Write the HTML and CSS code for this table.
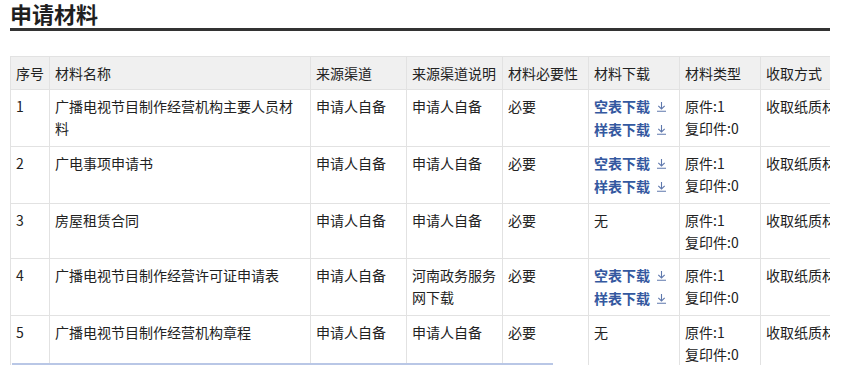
FILE: index.html
```html
<!DOCTYPE html>
<html lang="zh-CN">
<head>
<meta charset="utf-8">
<title>申请材料</title>
<link rel="stylesheet" href="styles.css">
</head>
<body>
<div class="page">
  <h2 class="title">申请材料</h2>
  <div class="table-wrap">
    <table class="mat-table">
      <colgroup>
        <col class="c1"><col class="c2"><col class="c3"><col class="c4"><col class="c5"><col class="c6"><col class="c7"><col class="c8">
      </colgroup>
      <thead>
        <tr><th>序号</th><th>材料名称</th><th>来源渠道</th><th>来源渠道说明</th><th>材料必要性</th><th>材料下载</th><th>材料类型</th><th>收取方式</th></tr>
      </thead>
      <tbody>
        <tr>
          <td>1</td><td>广播电视节目制作经营机构主要人员材料</td><td>申请人自备</td><td>申请人自备</td><td>必要</td>
          <td class="dl"><a class="dl-link">空表下载<svg class="ico" viewBox="0 0 11 11"><path d="M5.5 1v7M2.3 4.9L5.5 8l3.2-3.1M1 10.3h9"/></svg></a><a class="dl-link">样表下载<svg class="ico" viewBox="0 0 11 11"><path d="M5.5 1v7M2.3 4.9L5.5 8l3.2-3.1M1 10.3h9"/></svg></a></td>
          <td>原件:1<br>复印件:0</td><td>收取纸质材料</td>
        </tr>
        <tr>
          <td>2</td><td>广电事项申请书</td><td>申请人自备</td><td>申请人自备</td><td>必要</td>
          <td class="dl"><a class="dl-link">空表下载<svg class="ico" viewBox="0 0 11 11"><path d="M5.5 1v7M2.3 4.9L5.5 8l3.2-3.1M1 10.3h9"/></svg></a><a class="dl-link">样表下载<svg class="ico" viewBox="0 0 11 11"><path d="M5.5 1v7M2.3 4.9L5.5 8l3.2-3.1M1 10.3h9"/></svg></a></td>
          <td>原件:1<br>复印件:0</td><td>收取纸质材料</td>
        </tr>
        <tr>
          <td>3</td><td>房屋租赁合同</td><td>申请人自备</td><td>申请人自备</td><td>必要</td>
          <td>无</td>
          <td>原件:1<br>复印件:0</td><td>收取纸质材料</td>
        </tr>
        <tr>
          <td>4</td><td>广播电视节目制作经营许可证申请表</td><td>申请人自备</td><td>河南政务服务网下载</td><td>必要</td>
          <td class="dl"><a class="dl-link">空表下载<svg class="ico" viewBox="0 0 11 11"><path d="M5.5 1v7M2.3 4.9L5.5 8l3.2-3.1M1 10.3h9"/></svg></a><a class="dl-link">样表下载<svg class="ico" viewBox="0 0 11 11"><path d="M5.5 1v7M2.3 4.9L5.5 8l3.2-3.1M1 10.3h9"/></svg></a></td>
          <td>原件:1<br>复印件:0</td><td>收取纸质材料</td>
        </tr>
        <tr>
          <td>5</td><td>广播电视节目制作经营机构章程</td><td>申请人自备</td><td>申请人自备</td><td>必要</td>
          <td>无</td>
          <td>原件:1<br>复印件:0</td><td>收取纸质材料</td>
        </tr>
      </tbody>
    </table>
    <div class="scroll-thumb"></div>
  </div>
</div>
</body>
</html>
```
FILE: styles.css
```css
html, body {
  margin: 0;
  padding: 0;
  background: #fff;
}
body {
  font-family: "Noto Sans CJK SC", "Noto Sans", sans-serif;
  color: #222;
  font-size: 14px;
}
.page {
  width: 820px;
  padding: 0 10px;
}
.title {
  margin: 0;
  font-size: 22px;
  line-height: 26px;
  font-weight: 700;
  color: #1f1f1f;
  padding-bottom: 2px;
  border-bottom: 3px solid #333;
}
.table-wrap {
  position: relative;
  margin-top: 25px;
  width: 820px;
  overflow: hidden;
}
.mat-table {
  border-collapse: collapse;
  table-layout: fixed;
  width: 860px;
}
.c1 { width: 39px; }
.c2 { width: 261px; }
.c3 { width: 96px; }
.c4 { width: 96px; }
.c5 { width: 86px; }
.c6 { width: 91px; }
.c7 { width: 81px; }
.c8 { width: 110px; }
.mat-table th,
.mat-table td {
  border: 1px solid #e2e2e2;
  padding: 5px 5px;
  text-align: left;
  vertical-align: top;
  font-weight: 400;
  line-height: 22px;
  white-space: normal;
  overflow: hidden;
}
.mat-table td:last-child,
.mat-table th:last-child {
  white-space: nowrap;
}
.mat-table th {
  background: #f0f0f0;
}
.dl-link {
  display: flex;
  align-items: center;
  gap: 6px;
  line-height: 23px;
  color: #34589f;
  font-weight: 700;
  text-decoration: none;
}
.ico {
  width: 11px;
  height: 11px;
  fill: none;
  stroke: #5f78ad;
  stroke-width: 1.1;
}
.scroll-thumb {
  position: absolute;
  left: 2px;
  top: 307px;
  width: 541px;
  height: 3px;
  background: #b9c7e6;
}
```
